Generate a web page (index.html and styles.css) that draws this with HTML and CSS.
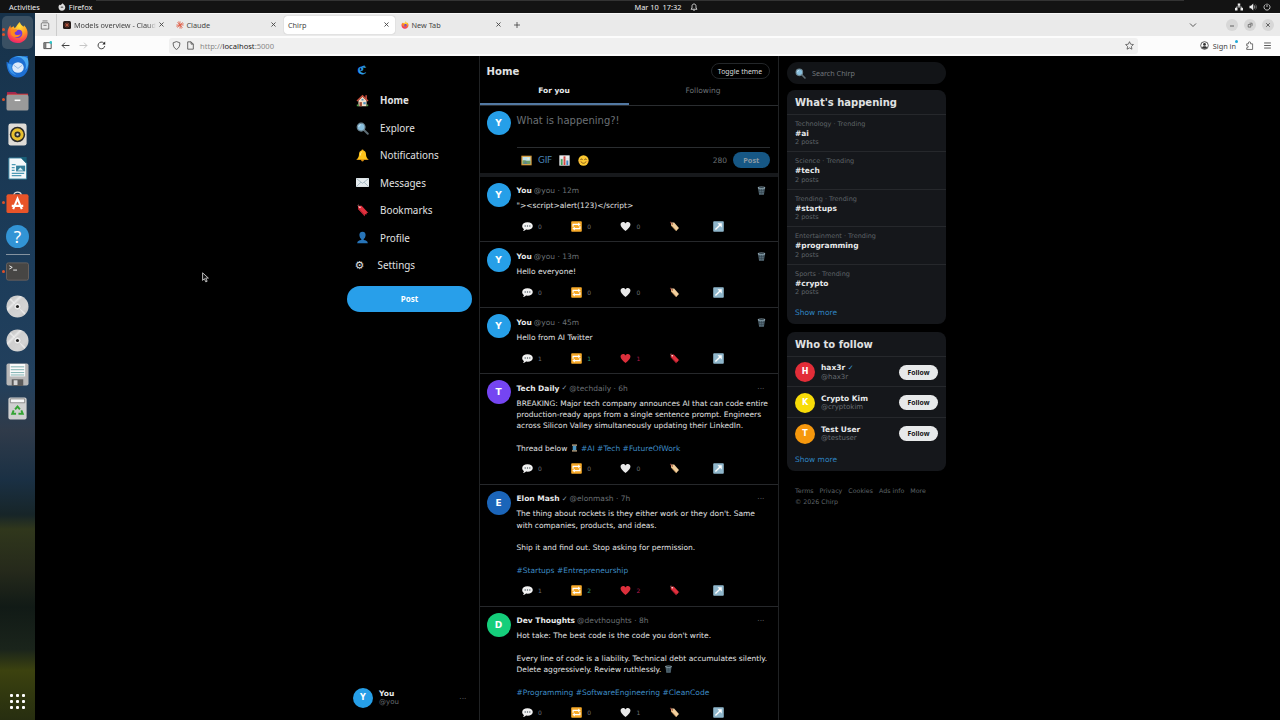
FILE: index.html
```html
<!DOCTYPE html>
<html lang="en">
<head>
    <meta charset="UTF-8">
    <meta name="viewport" content="width=device-width, initial-scale=1.0">
    <title>Chirp</title>
    <link rel="stylesheet" href="styles.css">
</head>
<body>
    <!-- Icon set -->
    <svg class="defs" width="0" height="0">
        <defs>
            <radialGradient id="fx" cx="0.6" cy="0.2" r="0.9">
                <stop offset="0" stop-color="#ffe43d"/><stop offset="0.45" stop-color="#ff9720"/><stop offset="0.8" stop-color="#f9355a"/><stop offset="1" stop-color="#d6207d"/>
            </radialGradient>
            <linearGradient id="disc" x1="0" y1="0" x2="1" y2="1">
                <stop offset="0" stop-color="#c4c4c4"/><stop offset="0.28" stop-color="#d0d0d0"/><stop offset="0.34" stop-color="#e8e8e8"/><stop offset="0.42" stop-color="#cfcfcf"/><stop offset="0.7" stop-color="#d4d4d4"/><stop offset="1" stop-color="#bababa"/>
            </linearGradient>
        </defs>
        <symbol id="firefox" viewBox="0 0 24 24">
            <path d="M12 23C5.500 23 1.500 18.500 1.500 12.800 1.500 9 3 7 4.500 4.500L5 7 8 5.500 9 7.500C11 6 12 3 14.500 1c.5 2.500 2 3.500 4 5l.3-1.500C22 8 22.800 10.500 22.500 13.500 22 19 17.500 23 12 23z" fill="url(#fx)"/>
            <path d="M7 11c1-2 4-2.500 5-1.500 2.500-1 5.500.5 5 4s-3.500 4.500-6 4C8 17 6.500 14.500 7 11z" fill="#7139dc"/>
            <path d="M5 10c2-2 4-1.500 7-.5-.5 2-3 1.500-3 3.500 1 2.500 4.500 1.500 6.500.5-1 4-8 4.500-10 .5z" fill="#ff8a1e"/>
        </symbol>
        <symbol id="home" viewBox="0 0 16 16">
            <path d="M11.500 1.500h2V6h-2z" fill="#b5453a"/><path d="M3 8l5-5 5 5v7H3z" fill="#f1dfc8"/>
            <path d="M8 .8L.6 8l1.200 1.300L8 3.400l6.200 5.900L15.400 8z" fill="#c94f3c"/>
            <path d="M4.300 10h3v5h-3z" fill="#9b4b35"/><path d="M9 10h3v2.700H9z" fill="#4f91bd"/><path d="M6.800 6h2.400v2H6.800z" fill="#4f91bd"/><path d="M1 13h2.500v2H1zM13 13h2v2h-2z" fill="#4d9a46"/>
        </symbol>
        <symbol id="search" viewBox="0 0 16 16">
            <path d="M9.500 9.500l5 5" stroke="#5c6b73" stroke-width="2.400" stroke-linecap="round"/>
            <circle cx="6.300" cy="6.300" r="4.800" fill="#89bfdd" stroke="#6c8592" stroke-width="1.500"/><path d="M3.500 6c.2-1.500 1-2.300 2.400-2.600" stroke="#d9f1fb" fill="none"/>
        </symbol>
        <symbol id="bell" viewBox="0 0 16 16">
            <circle cx="8" cy="13.500" r="1.800" fill="#d98c10"/><circle cx="8" cy="1.800" r="1.300" fill="#f0a91c"/>
            <path d="M8 1.800c-3 0-4.300 2-4.300 4.700C3.700 10 2.500 11 .8 13h14.400c-1.700-2-2.900-3-2.900-6.500C12.300 3.800 11 1.800 8 1.800z" fill="#fcc21b"/><path d="M.8 12.300h14.400v1H.8z" fill="#e6a012"/><path d="M5.500 8c0-3 .5-4 1.800-4.500" stroke="#fff0a0" fill="none"/>
        </symbol>
        <symbol id="mail" viewBox="0 0 16 16">
            <path d="M0 2.500h16v11H0z" fill="#e6ecef"/><path d="M.3 3l7.700 6 7.700-6M.3 13.200L6 7.700M15.700 13.200L10 7.700" fill="none" stroke="#8aa1ae" stroke-width=".8"/>
        </symbol>
        <symbol id="bookmark" viewBox="0 0 16 16">
            <path d="M2.500 2L7 2.200 15.200 11l-2-.2-.2 2-2-.2-.3 2.400L2.500 6z" fill="#e0303d"/><path d="M2.500 6l8.200 9 .2-1.500L2.800 5z" fill="#a81c2b"/><circle cx="4.800" cy="4" r="1" fill="#fff"/><path d="M4.500 4C2.500 3.500 2 1.500 3 .7" stroke="#d9a3a0" fill="none" stroke-width=".7"/>
        </symbol>
        <symbol id="label" viewBox="0 0 16 16">
            <path d="M3 2l4.500.2 7 8-4 4.500L3 6.500z" fill="#f1cf9d"/><path d="M3 6.500l7.500 8.200.6-.7-8-8.700z" fill="#c69256"/><circle cx="5" cy="4.300" r="1" fill="#9b5b32"/><path d="M5 4.300C2.500 4.200 1.500 2.500 2.500 1" stroke="#d8564b" fill="none" stroke-width=".9"/>
        </symbol>
        <symbol id="user" viewBox="0 0 16 16">
            <path d="M8 .8c-2.800 0-4 1.900-3.800 4.400.2 2.300 1.300 4 2.300 4.600v1.300C3.800 11.500 1.500 12.200 1.500 15.200h13c0-3-2.300-3.700-5-4.100V9.800c1-.6 2.100-2.300 2.300-4.600C12 2.700 10.800.8 8 .8z" fill="#2774b8"/>
        </symbol>
        <symbol id="picture" viewBox="0 0 16 16">
            <path d="M.5 1h15v14H.5z" fill="#d69c3c"/><path d="M2.300 2.800h11.400v10.400H2.300z" fill="#bfe0ec"/><path d="M2.300 8.500c3-2 5 1 11.400-.5v5.200H2.300z" fill="#6e9c65"/><circle cx="10.500" cy="5.500" r="1.400" fill="#f3f0c5"/><path d="M4 13.200l2.500-5 3 5z" fill="#5c8191"/>
        </symbol>
        <symbol id="chart" viewBox="0 0 16 16">
            <path d="M.5.5h15v15H.5z" fill="#eceff1"/><path d="M2.500 6h2.800v8.500H2.500z" fill="#3f9f56"/><path d="M6.600 2h2.800v12.500H6.600z" fill="#d64039"/><path d="M10.700 8h2.800v6.500h-2.800z" fill="#377fc0"/><path d="M.5 5.500h15M.5 10h15" stroke="#b5c0c6" stroke-width=".4"/>
        </symbol>
        <symbol id="smile" viewBox="0 0 16 16">
            <circle cx="8" cy="8" r="7.500" fill="#fcc932"/><path d="M3.700 6.800c.5-1.600 2.300-1.600 2.800 0M9.500 6.800c.5-1.600 2.300-1.600 2.800 0M4 9.500c2 3.500 6 3.500 8 0" fill="none" stroke="#664012" stroke-width="1.100" stroke-linecap="round"/><circle cx="2.700" cy="9.500" r="1.300" fill="#f9a94c"/><circle cx="13.300" cy="9.500" r="1.300" fill="#f9a94c"/>
        </symbol>
        <symbol id="bubble" viewBox="0 0 16 16">
            <path d="M8 1.700c4.500 0 7.700 2.300 7.700 5.500S12.500 12.700 8 12.700c-.8 0-1.500 0-2.200-.2-1 1.200-2.600 2-4.500 1.900 1-.8 1.500-1.800 1.500-2.900C1.200 10.500.3 9 .3 7.200.3 4 3.500 1.700 8 1.700z" fill="#f2f2f2"/><circle cx="4.600" cy="7.200" r="1" fill="#4b5960"/><circle cx="8" cy="7.200" r="1" fill="#4b5960"/><circle cx="11.400" cy="7.200" r="1" fill="#4b5960"/>
        </symbol>
        <symbol id="repeat" viewBox="0 0 16 16">
            <rect x=".3" y=".3" width="15.400" height="15.400" rx="1.200" fill="#f7a928"/><path d="M3 8.500V5h8.500M13 7.500V11H4.500" fill="none" stroke="#fff" stroke-width="1.700"/><path d="M10.500 2.200L14 5l-3.500 2.800zM5.500 8.200L2 11l3.500 2.800z" fill="#fff"/>
        </symbol>
        <symbol id="heart" viewBox="0 0 16 16">
            <path d="M8 14.600C3.500 11 .8 8.200.8 5.200.8 1.400 5.800.2 8 3.700 10.200.2 15.200 1.400 15.200 5.200c0 3-2.700 5.800-7.200 9.400z" fill="currentColor"/>
        </symbol>
        <symbol id="share" viewBox="0 0 16 16">
            <rect x=".3" y=".3" width="15.400" height="15.400" rx="1.200" fill="#8fb6cb"/><path d="M3.500 12.500L11 5" stroke="#fff" stroke-width="2"/><path d="M6.500 3.300h6.200v6.200z" fill="#fff"/>
        </symbol>
        <symbol id="trash" viewBox="0 0 16 16">
            <path d="M2 3.500h12l-1.700 12H3.700z" fill="#5d7480"/><path d="M4.500 5l1 10M8 5v10M11.500 5l-1 10M3 8h10M3.500 11.500h9" stroke="#2c3b43" stroke-width=".8"/><ellipse cx="8" cy="3" rx="6.700" ry="2.200" fill="#91a7b2"/><ellipse cx="8" cy="3" rx="4.900" ry="1.200" fill="#33444d"/>
        </symbol>
        <symbol id="thread" viewBox="0 0 16 16">
            <path d="M3 1h10v2.500H3zM3 12.500h10V15H3z" fill="#d8b68b"/><path d="M4.500 3.500h7v9h-7z" fill="#3987b7"/><path d="M4.500 6l7-1M4.500 8.500l7-1M4.500 11l7-1" stroke="#8cc3df" stroke-width=".7"/>
        </symbol>
        <symbol id="close" viewBox="0 0 8 8"><path d="M2.200 2.200l3.600 3.600M5.800 2.200L2.200 5.800" stroke="#444" stroke-width=".8"/></symbol>
        <symbol id="disc-icon" viewBox="0 0 24 24">
            <circle cx="12" cy="12" r="11.500" fill="url(#disc)"/><path d="M12 12L3.500 5l1.500-1.500zM12 12l8.500 7-1.500 1.500z" fill="#fff" opacity=".5"/><circle cx="12" cy="12" r="3.600" fill="#eee" stroke="#bbb" stroke-width=".5"/><circle cx="12" cy="12" r="1.600" fill="#222"/>
        </symbol>
    </svg>

    <header class="topbar">
        <div class="topbar-left">
            <span>Activities</span>
            <svg class="app-icon" viewBox="0 0 16 16"><path d="M8 15.500C3.500 15.500 1 12 1 8.500 1 6 2 4.500 3 3l.5 1.500L6 3.500 9.500.5C10 2 12 3 13 4.500 16.500 9 13.500 15.500 8 15.500z" fill="#ddd"/><path d="M5 8c2-2 5-1 6 1-1-.5-2 .5-3 .5S5.500 9.500 5 8z" fill="#555"/></svg>
            <span>Firefox</span>
        </div>
        <div class="topbar-clock">
            <span>Mar 10&nbsp; 17:32</span>
            <svg class="clock-bell" viewBox="0 0 16 16"><path d="M8 2c-3 0-4 2-4 4.500V10l-2 2.500h12L12 10V6.500C12 4 11 2 8 2zM6.500 14.500h3" fill="none" stroke="#eee" stroke-width="1.600"/></svg>
        </div>
        <div class="topbar-status">
            <svg viewBox="0 0 16 16"><path d="M5.500 1h5v4.500h-5zM0 10h5v5H0zM11 10h5v5h-5z" fill="#eee"/><path d="M8 5v3M2.500 11V8h11v3" stroke="#eee" fill="none" stroke-width="1.500"/></svg>
            <svg viewBox="0 0 16 16"><path d="M1 5.500h3L8.500 1v14L4 10.500H1z" fill="#eee"/><path d="M10.500 5c1.500 2 1.500 4 0 6" stroke="#eee" stroke-width="1.500" fill="none"/><path d="M13 3c2.500 3 2.500 7 0 10" stroke="#777" stroke-width="1.500" fill="none"/></svg>
            <svg viewBox="0 0 16 16"><path d="M5 3a6 6 0 1 0 6 0M8 1v7" stroke="#eee" stroke-width="1.600" fill="none"/></svg>
        </div>
    </header>

    <div class="desktop">
        <nav class="dock">
            <div class="dock-item active running two"><svg><use href="#firefox"/></svg></div>
            <div class="dock-item"><svg viewBox="0 0 24 24"><path d="M.5 7c1 0 1.500 1 2.500 1 0-3 2-5 5-6 3-1.500 7-1.200 9 0 2-1 4-1 6-.5-1 2-.5 3 0 6C25 15 20 23.500 12.500 23.500S.5 17 .5 7z" fill="#1d6fd2"/><path d="M8 3c4-2 8-1 10 2 3 3 3.500 7 2 11 4-4 4-9 2.500-13C18 .5 12 0 8 3z" fill="#48a8f2"/><path d="M2 9c0 6 3 11 9 12-4-3-6-6-5-11z" fill="#3a95ea"/><ellipse cx="12.500" cy="13" rx="6" ry="5.500" fill="#dceafa"/><path d="M8 10.500l4.500 3.500 4.500-3.500" fill="none" stroke="#8fb8e6"/></svg></div>
            <div class="dock-item running"><svg viewBox="0 0 24 24"><path d="M1 3h9l2 2h11v8H1z" fill="#a0254f"/><path d="M1 5h22v8H1z" fill="#c9383c"/><rect x=".5" y="6" width="23" height="16.500" rx="2" fill="#9a9a9a"/><path d="M9 11h6v1.600H9z" fill="#fff"/></svg></div>
            <div class="dock-item"><svg viewBox="0 0 24 24"><rect x="2.500" y=".5" width="19" height="23" rx="2.500" fill="#dfdcd7"/><circle cx="12" cy="12" r="8" fill="#2b2b2b"/><circle cx="12" cy="12" r="4.800" fill="none" stroke="#e8c02f" stroke-width="3.200"/><circle cx="12" cy="12" r="1.300" fill="#ddd"/></svg></div>
            <div class="dock-item"><svg viewBox="0 0 24 24"><path d="M3 1h13l5.500 5.500V23H3z" fill="#f4f8fa" stroke="#35809c"/><path d="M15 0h6.500v7z" fill="#196078"/><path d="M6 8h4M6 11h3M6 14h3M6 17h13M6 19.500h10" stroke="#4d9ab5" stroke-width="1.300"/><path d="M10.500 9H20v6h-9.500z" fill="#357f9a"/><path d="M12 14l3-3 3 3z" fill="#d5edf4"/></svg></div>
            <div class="dock-item running"><svg viewBox="0 0 24 24"><path d="M8 5c0-5 8-5 8 0" fill="none" stroke="#ddd" stroke-width="1.300"/><rect x=".5" y="3.500" width="23" height="19.500" rx="2" fill="#e85429"/><path d="M7.500 19L12 8l4.500 11M6 15.500h12" fill="none" stroke="#fff" stroke-width="2.200"/></svg></div>
            <div class="dock-item"><div class="help">?</div></div>
            <hr>
            <div class="dock-item running"><svg viewBox="0 0 24 24"><rect x=".5" y="3" width="23" height="18" rx="2" fill="#474644" stroke="#67615f"/><path d="M3.500 6l3 1.700-3 1.700M7.500 10.500h4" stroke="#fff" stroke-width=".9" fill="none"/></svg></div>
            <div class="dock-item"><svg><use href="#disc-icon"/></svg></div>
            <div class="dock-item"><svg><use href="#disc-icon"/></svg></div>
            <div class="dock-item"><svg viewBox="0 0 24 24"><rect x=".5" y=".5" width="23" height="23" rx="2" fill="#b8b8b8"/><path d="M4 1h16v13H4z" fill="#fafafa"/><path d="M5 4h14M5 7h14M5 10h14M5 12.500h14" stroke="#5a9c9c" stroke-width=".8"/><path d="M6 17h12v7H6z" fill="#5c5c5c"/><path d="M8 18h4v5H8z" fill="#d5d5d5"/></svg></div>
            <div class="dock-item"><svg viewBox="0 0 24 24"><rect x="2.500" y=".5" width="19" height="23" rx="2" fill="#d0d0d0"/><path d="M4.500 2h15v4h-15z" fill="#f7f7f7" stroke="#777" stroke-width=".8"/><path d="M9.500 13l2.500-3 2.500 3M16 14l1.500 3.500H13M10.500 17.500H6.500L8 14" fill="none" stroke="#34a333" stroke-width="2"/></svg></div>
            <div class="apps-grid"><i></i><i></i><i></i><i></i><i></i><i></i><i></i><i></i><i></i></div>
        </nav>

        <div class="window">
            <div class="tabstrip">
                <div class="tab-history"><svg viewBox="0 0 16 16"><path d="M4 1.500h8M3 4.500h10l1 1.500v8.500H2V6zM5.500 8.500h5" fill="none" stroke="#555" stroke-width="1.200"/></svg></div>
                <div class="tab"><svg class="favicon" viewBox="0 0 16 16"><rect width="16" height="16" rx="3" fill="#241a18"/><path d="M8 3v10M3 8h10M4.500 4.500l7 7M11.500 4.500l-7 7" stroke="#c55c43" stroke-width="1.500"/></svg><span class="fade">Models overview - Claud</span><svg class="x"><use href="#close"/></svg></div>
                <div class="tab"><svg class="favicon" viewBox="0 0 16 16"><path d="M8 .5v15M.5 8h15M2.700 2.700l10.600 10.600M13.300 2.700L2.700 13.300M5 1l6 14M15 5L1 11" stroke="#df5f48" stroke-width="1.500"/></svg><span>Claude</span><svg class="x"><use href="#close"/></svg></div>
                <div class="tab current"><span>Chirp</span><svg class="x"><use href="#close"/></svg></div>
                <div class="tab"><svg class="favicon"><use href="#firefox"/></svg><span>New Tab</span><svg class="x"><use href="#close"/></svg></div>
                <svg class="new-tab" viewBox="0 0 16 16"><path d="M8 2v12M2 8h12" stroke="#333" stroke-width="1.500"/></svg>
                <div class="window-controls">
                    <svg class="caret" viewBox="0 0 16 16"><path d="M2 5l6 6 6-6" fill="none" stroke="#333" stroke-width="1.600"/></svg>
                    <span class="control"><svg viewBox="0 0 8 8"><path d="M2 5h4" stroke="#555" stroke-width=".9"/></svg></span>
                    <span class="control"><svg viewBox="0 0 8 8"><path d="M2.200 3.500h2.600v2.600H2.200zM3.500 2.200h2.600v2.600" fill="none" stroke="#555" stroke-width=".7"/></svg></span>
                    <span class="control"><svg><use href="#close"/></svg></span>
                </div>
            </div>
            <div class="toolbar">
                <div class="nav-buttons">
                    <svg viewBox="0 0 16 16"><path d="M1.500 3h13v10.500h-13z" fill="none" stroke="#333" stroke-width="1.500"/><path d="M2 3h4v10H2z" fill="#777"/><circle cx="14" cy="2.500" r="2.500" fill="#2bc4c9"/></svg>
                    <svg viewBox="0 0 16 16"><path d="M15 8H2M7 3L2 8l5 5" fill="none" stroke="#222" stroke-width="1.500"/></svg>
                    <svg viewBox="0 0 16 16"><path d="M1 8h13M9 3l5 5-5 5" fill="none" stroke="#bbb" stroke-width="1.500"/></svg>
                    <svg viewBox="0 0 16 16"><path d="M13.800 9A6 6 0 1 1 12 3.500L14 5.500" fill="none" stroke="#222" stroke-width="1.500"/><path d="M14.500 1v5h-5z" fill="#222"/></svg>
                </div>
                <div class="urlbar">
                    <svg viewBox="0 0 16 16"><path d="M8 1l6 2.200C14 9 12.500 12.500 8 15 3.500 12.500 2 9 2 3.200z" fill="none" stroke="#444" stroke-width="1.400"/></svg>
                    <svg viewBox="0 0 16 16"><path d="M3 1.500h6l4 4v9H3zM9 1.500v4h4" fill="none" stroke="#444" stroke-width="1.400"/></svg>
                    <span class="url">http://<b>localhost</b>:5000</span>
                    <svg class="star" viewBox="0 0 16 16"><path d="M8 1.200l2.100 4.500 4.900.6-3.600 3.400.9 4.900L8 12.200l-4.300 2.400.9-4.900L1 6.300l4.900-.6z" fill="none" stroke="#444" stroke-width="1.300"/></svg>
                </div>
                <div class="toolbar-right">
                    <svg viewBox="0 0 16 16"><circle cx="8" cy="8" r="6.800" fill="none" stroke="#333" stroke-width="1.400"/><circle cx="8" cy="6" r="2.500" fill="#333"/><path d="M3.500 12c1-3.500 8-3.500 9 0-2 2.500-7 2.500-9 0z" fill="#333"/></svg>
                    <span class="signin">Sign in</span>
                    <svg class="ext" viewBox="0 0 16 16"><path d="M3 5h3V3.500a2 2 0 0 1 4 0V5h3.500v10H3v-3h1a1.700 1.700 0 0 0 0-3.500H3z" fill="none" stroke="#444" stroke-width="1.300"/></svg>
                    <svg viewBox="0 0 16 16"><path d="M2 3.500h12M2 8h12M2 12.500h12" stroke="#333" stroke-width="1.400"/></svg>
                </div>
            </div>

            <div class="app">
                <aside class="sidebar">
                    <div class="logo">&#x212D;</div>
                    <a class="nav-item selected"><svg><use href="#home"/></svg>Home</a>
                    <a class="nav-item"><svg><use href="#search"/></svg>Explore</a>
                    <a class="nav-item"><svg><use href="#bell"/></svg>Notifications</a>
                    <a class="nav-item"><svg><use href="#mail"/></svg>Messages</a>
                    <a class="nav-item"><svg><use href="#bookmark"/></svg>Bookmarks</a>
                    <a class="nav-item"><svg><use href="#user"/></svg>Profile</a>
                    <a class="nav-item settings"><span class="gear">&#x2699;</span>Settings</a>
                    <button class="post-btn">Post</button>
                    <div class="account">
                        <div class="avatar small blue">Y</div>
                        <div class="who"><strong>You</strong><span>@you</span></div>
                        <span class="dots">···</span>
                    </div>
                </aside>

                <main class="feed">
                    <div class="feed-header">
                        <h1>Home</h1>
                        <button class="theme-btn">Toggle theme</button>
                    </div>
                    <div class="feed-tabs">
                        <div class="feed-tab on">For you</div>
                        <div class="feed-tab">Following</div>
                    </div>
                    <div class="composer">
                        <div class="avatar blue">Y</div>
                        <div class="composer-body">
                            <div class="placeholder">What is happening?!</div>
                            <div class="composer-tools">
                                <svg><use href="#picture"/></svg>
                                <span class="gif">GIF</span>
                                <svg><use href="#chart"/></svg>
                                <svg><use href="#smile"/></svg>
                                <span class="count">280</span>
                                <button class="send">Post</button>
                            </div>
                        </div>
                    </div>
                    <div id="tweets"></div>
                </main>

                <aside class="right">
                    <div class="searchbox"><svg><use href="#search"/></svg>Search Chirp</div>
                    <section class="card">
                        <h2>What's happening</h2>
                        <div id="trends"></div>
                        <a class="more">Show more</a>
                    </section>
                    <section class="card">
                        <h2>Who to follow</h2>
                        <div class="follow"><div class="avatar small red">H</div><div class="who"><strong>hax3r <i class="tick">✓</i></strong><span>@hax3r</span></div><button>Follow</button></div>
                        <div class="follow"><div class="avatar small yellow">K</div><div class="who"><strong>Crypto Kim</strong><span>@cryptokim</span></div><button>Follow</button></div>
                        <div class="follow"><div class="avatar small orange">T</div><div class="who"><strong>Test User</strong><span>@testuser</span></div><button>Follow</button></div>
                        <a class="more">Show more</a>
                    </section>
                    <footer>
                        <div class="links"><span>Terms</span><span>Privacy</span><span>Cookies</span><span>Ads info</span><span>More</span></div>
                        <div>© 2026 Chirp</div>
                    </footer>
                </aside>
            </div>
        </div>
    </div>

    <svg class="cursor" viewBox="0 0 12 18"><path d="M1 1v13l3-3 2.500 5.500 2.300-1L6.400 10H11z" fill="#111" stroke="#eee" stroke-width="1.300"/></svg>

    <script>
        const tweets = [
            { name: 'You', handle: '@you', time: '12m', color: 'blue', mine: true, text: '"><script>alert(123)<\/script>', counts: [0, 0, 0] },
            { name: 'You', handle: '@you', time: '13m', color: 'blue', mine: true, text: 'Hello everyone!', counts: [0, 0, 0] },
            { name: 'You', handle: '@you', time: '45m', color: 'blue', mine: true, text: 'Hello from AI Twitter', counts: [1, 1, 1], liked: true, reposted: true },
            { name: 'Tech Daily', handle: '@techdaily', time: '6h', color: 'purple', verified: true, text: 'BREAKING: Major tech company announces AI that can code entire\nproduction-ready apps from a single sentence prompt. Engineers\nacross Silicon Valley simultaneously updating their LinkedIn.\n\nThread below :thread: #AI #Tech #FutureOfWork', counts: [0, 0, 0] },
            { name: 'Elon Mash', handle: '@elonmash', time: '7h', color: 'navy', verified: true, text: "The thing about rockets is they either work or they don't. Same\nwith companies, products, and ideas.\n\nShip it and find out. Stop asking for permission.\n\n#Startups #Entrepreneurship", counts: [1, 2, 2], liked: true, reposted: true },
            { name: 'Dev Thoughts', handle: '@devthoughts', time: '8h', color: 'green', text: "Hot take: The best code is the code you don't write.\n\nEvery line of code is a liability. Technical debt accumulates silently.\nDelete aggressively. Review ruthlessly. :trash:\n\n#Programming #SoftwareEngineering #CleanCode", counts: [0, 0, 1] }
        ];

        const trends = [
            ['Technology', '#ai'],
            ['Science', '#tech'],
            ['Trending', '#startups'],
            ['Entertainment', '#programming'],
            ['Sports', '#crypto']
        ];

        function icon(id) {
            return `<svg><use href="#${id}"/></svg>`;
        }

        function formatText(text) {
            return text
                .replace(/</g, '&lt;')
                .replace(/>/g, '&gt;')
                .replace(/#\w+/g, '<a>$&</a>')
                .replace(/:(thread|trash):/g, (m, id) => icon(id));
        }

        document.getElementById('tweets').innerHTML = tweets.map(t => `
            <article class="tweet">
                <div class="avatar ${t.color}">${t.name[0]}</div>
                <div class="tweet-body">
                    <div class="tweet-head">
                        <strong>${t.name}</strong>
                        ${t.verified ? '<i class="tick">✓</i>' : ''}
                        <span>${t.handle} · ${t.time}</span>
                        ${t.mine ? `<span class="delete">${icon('trash')}</span>` : '<span class="dots">···</span>'}
                    </div>
                    <div class="tweet-text">${formatText(t.text)}</div>
                    <div class="actions">
                        <span>${icon('bubble')}<b>${t.counts[0]}</b></span>
                        <span class="${t.reposted ? 'reposted' : ''}">${icon('repeat')}<b>${t.counts[1]}</b></span>
                        <span class="like ${t.liked ? 'liked' : ''}">${icon('heart')}<b>${t.counts[2]}</b></span>
                        <span>${icon(t.liked ? 'bookmark' : 'label')}</span>
                        <span>${icon('share')}</span>
                    </div>
                </div>
            </article>`).join('');

        document.getElementById('trends').innerHTML = trends.map(([topic, tag]) => `
            <div class="trend">
                <div>${topic} · Trending</div>
                <strong>${tag}</strong>
                <div>2 posts</div>
            </div>`).join('');
    </script>
</body>
</html>
```
FILE: styles.css
```css
* {
    box-sizing: border-box;
}
body {
    margin: 0;
    height: 720px;
    overflow: hidden;
    display: flex;
    flex-direction: column;
    background: #000;
    color: #e0e2e3;
    font-family: "DejaVu Sans", sans-serif;
    font-size: 7.5px;
}
svg {
    display: block;
    flex: none;
}
button {
    font-family: "Noto Sans", sans-serif;
    border: none;
    padding: 0;
}
.defs {
    position: absolute;
}

/* Gnome top bar */
.topbar {
    height: 13px;
    flex: none;
    display: grid;
    grid-template-columns: 1fr auto 1fr;
    align-items: center;
    background: linear-gradient(#333, #333) 96px 0 / 1088px 1px no-repeat #131313;
    color: #eee;
    font: 7.4px "Noto Sans", sans-serif;
}
.topbar-left, .topbar-clock, .topbar-status {
    display: flex;
    align-items: center;
    height: 12px;
}
.topbar-left {
    padding-left: 9px;
}
.app-icon {
    width: 8px;
    height: 8px;
    margin: 0 3px 0 18px;
}
.topbar-clock {
    padding-left: 52px;
    gap: 8px;
}
.clock-bell {
    width: 8px;
    height: 8px;
}
.topbar-status {
    justify-content: flex-end;
    gap: 6px;
    padding-right: 9px;
}
.topbar-status svg {
    width: 8px;
    height: 8px;
}

.desktop {
    flex: 1;
    display: flex;
    min-height: 0;
}

/* Dock */
.dock {
    width: 35px;
    flex: none;
    display: flex;
    flex-direction: column;
    align-items: center;
    padding-top: 3px;
    background: linear-gradient(#17324a, #1c3c5a 35%, #22405d 52%, #303b4a 59%, #1a3044 66%, #172528 71%, #30371c 73%, #25291b 79%, #111a16 84%, #1a241b 90%, #3c420f 93%, #2f360f 97%, #272e10);
}
.dock-item {
    width: 33px;
    height: 34.15px;
    display: flex;
    align-items: center;
    justify-content: center;
    position: relative;
    flex: none;
}
.dock-item svg {
    width: 23px;
    height: 23px;
}
.dock-item.active {
    height: 33px;
    width: 31px;
    border-radius: 5px;
    background: #3a5063;
}
.running::before {
    content: "";
    position: absolute;
    left: 1px;
    top: 15px;
    width: 3px;
    height: 3px;
    border-radius: 50%;
    background: #dc5029;
}
.two::before {
    left: 0;
    top: 12px;
    box-shadow: 0 5px #dc5029;
}
.help {
    width: 23px;
    height: 23px;
    border-radius: 50%;
    background: #3294d5;
    color: #fff;
    font: 17px/23px "Noto Sans", sans-serif;
    text-align: center;
}
.dock hr {
    width: 24px;
    height: 1px;
    margin: 0;
    border: none;
    background: #8593a0;
}
.apps-grid {
    margin: auto 0 11px;
    display: grid;
    grid-template-columns: repeat(3, 3px);
    gap: 3px;
}
.apps-grid i {
    height: 3px;
    border-radius: 1px;
    background: #fff;
}

/* Browser window */
.window {
    flex: 1;
    display: flex;
    flex-direction: column;
    min-width: 0;
}
.tabstrip {
    height: 23px;
    flex: none;
    display: flex;
    align-items: center;
    padding-bottom: 1px;
    background: #eaeaea;
    color: #444;
    font: 7.3px "Noto Sans", sans-serif;
    border-top: 1px solid #f8f8f8;
}
.tab-history {
    width: 22px;
    height: 22px;
    padding: 6px 5px;
    border-right: 1px solid #ccc;
}
.tab-history svg {
    width: 10px;
    height: 10px;
}
.tab {
    width: 110.5px;
    height: 18px;
    margin-left: 2px;
    padding: 0 4px;
    display: flex;
    align-items: center;
    border-radius: 3px;
    white-space: nowrap;
}
.tab.current {
    background: #fff;
    box-shadow: 0 0 1px #999;
}
.tab .favicon {
    width: 8px;
    height: 8px;
    margin-right: 3px;
}
.tab .x {
    width: 9px;
    height: 9px;
    margin-left: auto;
}
.fade {
    letter-spacing: -0.05px;
    -webkit-mask-image: linear-gradient(90deg, #000 90%, transparent);
    mask-image: linear-gradient(90deg, #000 90%, transparent);
}
.new-tab {
    width: 8px;
    height: 8px;
    margin-left: 6px;
}
.window-controls {
    margin-left: auto;
    display: flex;
    align-items: center;
    gap: 6px;
    padding-right: 6px;
}
.caret {
    width: 8px;
    height: 8px;
    margin-right: 23px;
}
.control {
    width: 12px;
    height: 12px;
    padding: 2px;
    border-radius: 50%;
    background: #d7d7d7;
}
.control svg {
    width: 8px;
    height: 8px;
}
.toolbar {
    height: 20px;
    flex: none;
    display: flex;
    align-items: center;
    padding-bottom: 1px;
    background: #fcfcfc;
    color: #444;
    font: 7.3px "Noto Sans", sans-serif;
}
.nav-buttons {
    display: flex;
    gap: 9px;
    padding-left: 7.5px;
    width: 134px;
}
.toolbar svg {
    width: 9px;
    height: 9px;
}
.urlbar {
    width: 969px;
    height: 16px;
    display: flex;
    align-items: center;
    gap: 5px;
    padding: 0 4px 0 3px;
    border-radius: 3px;
    background: #f0f0f0;
    color: #888;
    font-size: 7.6px;
}
.urlbar b {
    font-weight: 400;
    color: #222;
}
.star {
    margin-left: auto;
}
.toolbar-right {
    margin-left: auto;
    display: flex;
    align-items: center;
    padding-right: 8px;
}
.signin {
    margin: 0 9px 0 4px;
    position: relative;
}
.signin::after {
    content: "";
    position: absolute;
    right: -2px;
    top: -1px;
    width: 3px;
    height: 3px;
    border-radius: 50%;
    background: #1fa9d8;
}
.ext {
    margin-right: 9px;
}

/* Chirp */
.app {
    flex: 1;
    display: flex;
    padding-left: 304.5px;
    min-height: 0;
    background: #000;
}
.sidebar {
    width: 139px;
    padding: 6px 6px 0 7.5px;
    display: flex;
    flex-direction: column;
    font-family: "Noto Sans", sans-serif;
}
.logo {
    height: 25px;
    padding: 0 10.5px;
    color: #2b9ce8;
    font: bold 11px/18px "DejaVu Sans", sans-serif;
    -webkit-text-stroke: 0.3px #2b9ce8;
}
.nav-item {
    height: 27.4px;
    padding-left: 9px;
    display: flex;
    align-items: center;
    gap: 11px;
    font-size: 9.9px;
}
.nav-item svg {
    width: 13px;
    height: 13px;
}
.nav-item.selected {
    font-weight: 700;
    font-size: 9.7px;
}
.nav-item.settings {
    padding-left: 7.5px;
}
.gear {
    width: 12px;
    font: 11px "DejaVu Sans", sans-serif;
}
.post-btn {
    height: 26px;
    margin-top: 7px;
    flex: none;
    width: 125px;
    border-radius: 13px;
    background: #289fea;
    color: #fff;
    font-size: 8px;
    font-weight: 700;
}
.account {
    margin-top: auto;
    padding: 0 6px 12px 6px;
    display: flex;
    align-items: center;
    gap: 6px;
}
.who {
    line-height: 9px;
    font-size: 7px;
    color: #666b70;
    font-family: "DejaVu Sans", sans-serif;
}
.who strong {
    display: block;
    color: #e7e9ea;
    font-size: 7.5px;
}
.account .dots {
    margin-left: auto;
}
.dots {
    color: #666b70;
    font-family: "DejaVu Sans", sans-serif;
}
.avatar {
    width: 24px;
    height: 24px;
    flex: none;
    border-radius: 50%;
    color: #fff;
    font: bold 9px/24px "DejaVu Sans", sans-serif;
    text-align: center;
}
.avatar.small {
    width: 20px;
    height: 20px;
    font-size: 8px;
    line-height: 20px;
}
.blue { background: #269fe8; }
.purple { background: #7545f2; }
.navy { background: #1b65b9; }
.green { background: #15ce7b; }
.red { background: #e22d38; }
.yellow { background: #f8dc08; }
.orange { background: #f6980d; }

.feed {
    width: 300px;
    border-left: 1px solid #202224;
    border-right: 1px solid #202224;
    overflow: hidden;
}
.feed-header {
    height: 26px;
    padding: 4px 8px 0 7px;
    display: flex;
    align-items: center;
    justify-content: space-between;
}
.feed-header h1 {
    margin: 0;
    font-size: 10.1px;
}
.theme-btn {
    width: 59px;
    height: 16px;
    border: 1px solid #232629;
    border-radius: 8px;
    background: #000;
    color: #d9dbdc;
    font-size: 6.9px;
}
.feed-tabs {
    height: 23.5px;
    display: flex;
    border-bottom: 1px solid #2a2d30;
}
.feed-tab {
    flex: 1;
    padding-top: 4px;
    text-align: center;
    color: #6b7075;
    line-height: 10px;
    font-size: 7.5px;
    border-bottom: 2px solid transparent;
}
.feed-tab.on {
    color: #e7e9ea;
    font-weight: 700;
    border-bottom-color: #5278a2;
}
.composer {
    height: 71px;
    padding: 5.5px 8px 0 7px;
    display: flex;
    gap: 6px;
    border-bottom: 4px solid #17191c;
}
.composer-body {
    flex: 1;
}
.placeholder {
    height: 35.5px;
    padding-top: 3px;
    font-size: 10px;
    line-height: 14px;
    color: #6b7075;
}
.composer-tools {
    height: 26px;
    padding-left: 4px;
    border-top: 1px solid #2a2d30;
    display: flex;
    align-items: center;
    gap: 8px;
}
.composer-tools svg {
    width: 11px;
    height: 11px;
}
.gif {
    width: 12.5px;
    margin: 0 0 0 -1.5px;
    font-size: 9px;
    letter-spacing: -0.3px;
    color: #4a86bb;
}
.count {
    margin: 0 -2px 0 auto;
    color: #6b7075;
}
.send {
    width: 36.5px;
    height: 16px;
    border-radius: 8px;
    background: #165785;
    color: #8d9aa3;
    font-size: 7.4px;
    font-weight: 700;
}
.tweet {
    padding: 6px 8px 5.75px 7px;
    display: flex;
    gap: 6px;
    border-bottom: 1px solid #26282b;
}
.tweet-body {
    flex: 1;
    min-width: 0;
}
.tweet-head {
    height: 16.5px;
    display: flex;
    align-items: center;
    gap: 2px;
    color: #6b7075;
}
.tweet-head strong {
    color: #e7e9ea;
}
.tick {
    font-style: normal;
    font-weight: 400;
    font-size: 7px;
    color: #8497a8;
}
.who .tick {
    color: #3f9bdc;
}
.tweet-head .dots, .tweet-head .delete {
    margin-left: auto;
    padding-right: 5px;
}
.tweet-head .delete {
    padding-right: 3.5px;
}
.delete svg {
    width: 9px;
    height: 9px;
}
.tweet-text {
    margin-top: 1.25px;
    line-height: 11.25px;
    white-space: pre;
}
.tweet-text a {
    color: #3f8dc6;
}
.tweet-text svg {
    display: inline-block;
    width: 9px;
    height: 8px;
    vertical-align: -1px;
}
.actions {
    height: 18px;
    margin-top: 6px;
    padding-left: 5px;
    display: grid;
    grid-template-columns: 49.3px 49.3px 49.3px 44px auto;
    align-items: center;
}
.actions span {
    display: flex;
    align-items: center;
    gap: 5.5px;
}
.actions svg {
    width: 11px;
    height: 11px;
}
.actions b {
    font-weight: 400;
    font-size: 6px;
    color: #6b7075;
}
.like svg {
    color: #e9e9e9;
}
.reposted b {
    color: #2f9a73;
}
.liked svg {
    color: #dc2f3b;
}
.liked b {
    color: #b3194f;
}

/* Right column */
.right {
    width: 159px;
    margin-left: 8.5px;
    padding-top: 6px;
}
.searchbox {
    height: 22px;
    padding-left: 8px;
    display: flex;
    align-items: center;
    gap: 6px;
    border-radius: 11px;
    background: #121417;
    color: #71767b;
    font: 7.2px "Noto Sans", sans-serif;
}
.searchbox svg {
    width: 11px;
    height: 11px;
}
.card {
    margin-top: 6px;
    border-radius: 8px;
    background: #15171b;
    overflow: hidden;
}
.card + .card {
    margin-top: 8px;
}
.card h2 {
    height: 24.5px;
    margin: 0;
    padding: 0 8px;
    font-size: 10px;
    line-height: 25.5px;
    border-bottom: 1px solid #26282c;
}
.trend {
    height: 37.5px;
    padding: 5px 8px 0;
    font-size: 6.5px;
    line-height: 9px;
    color: #5f6468;
    border-bottom: 1px solid #26282c;
}
.trend strong {
    display: block;
    font-size: 7.5px;
    line-height: 9.5px;
    color: #e7e9ea;
}
.trend:last-child, .follow:nth-last-child(2) {
    border-bottom: none;
}
.more {
    display: block;
    height: 22px;
    padding: 0 8px;
    line-height: 22px;
    color: #2f86c4;
}
.card + .card .more {
    height: 22.5px;
    line-height: 24px;
}
.follow {
    height: 30.5px;
    padding: 1.5px 8px 0;
    display: flex;
    align-items: center;
    gap: 6px;
    border-bottom: 1px solid #26282c;
}
.follow button {
    width: 39px;
    height: 15px;
    margin-left: auto;
    border-radius: 8px;
    background: #e7e9ea;
    color: #111;
    font-size: 6.8px;
    font-weight: 700;
}
footer {
    padding: 15.5px 8px;
    font-size: 6.3px;
    line-height: 10.5px;
    color: #5f6468;
}
.links {
    display: flex;
    gap: 6px;
}

/* Mouse pointer floats over the page */
.cursor {
    position: absolute;
    left: 202px;
    top: 272px;
    width: 7px;
    height: 11px;
}
```
